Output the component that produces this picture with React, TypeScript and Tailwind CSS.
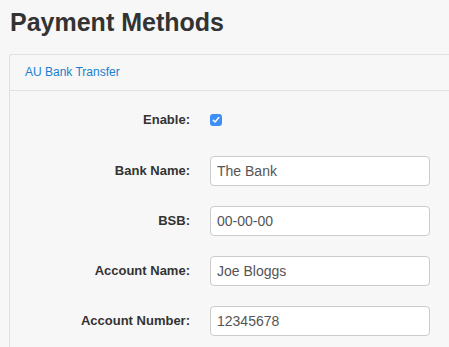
import React from 'react';

const fields = [
  { label: 'Bank Name:', value: 'The Bank' },
  { label: 'BSB:', value: '00-00-00' },
  { label: 'Account Name:', value: 'Joe Bloggs' },
  { label: 'Account Number:', value: '12345678' },
];

export default function App() {
  return (
    <div className="min-h-screen w-full overflow-hidden bg-[#f7f7f7] pl-[9px] font-['Liberation_Sans',Arial,sans-serif] text-[#333]">
      <h1 className="ml-[1px] pt-[8px] text-[25px] font-bold leading-[28px] text-[#333]">Payment Methods</h1>

      <div className="mt-[18px] w-[460px] rounded-tl-[3px] border-l border-t border-[#e1e1e1] bg-[#f7f7f7]">
        <div className="border-b border-[#e1e1e1] px-[15px] py-[9px] text-[12px] leading-[17px] text-[#1a7fcf]">
          AU Bank Transfer
        </div>

        <div className="flex flex-col pb-[20px] pt-[14px]">
          <div className="flex h-[30px] items-center">
            <div className="w-[180px] text-right text-[13px] font-bold">Enable:</div>
            <div className="ml-[20px] flex h-[12px] w-[12px] items-center justify-center rounded-[3px] bg-[#3d8ef7]">
              <svg width="8" height="8" viewBox="0 0 8 8" fill="none">
                <path d="M1.2 4.2 L3.1 6 L6.8 1.6" stroke="white" strokeWidth="1.5" strokeLinecap="round" strokeLinejoin="round" />
              </svg>
            </div>
          </div>

          {fields.map((f, i) => (
            <div key={i} className={`flex h-[30px] items-center ${i === 0 ? 'mt-[21px]' : 'mt-[20px]'}`}>
              <div className="w-[180px] text-right text-[13px] font-bold">{f.label}</div>
              <input
                readOnly
                value={f.value}
                className="ml-[20px] h-[30px] w-[220px] rounded-[4px] border border-[#cccccc] bg-white px-[6px] text-[14px] text-[#555] outline-none"
              />
            </div>
          ))}
        </div>
      </div>
    </div>
  );
}
